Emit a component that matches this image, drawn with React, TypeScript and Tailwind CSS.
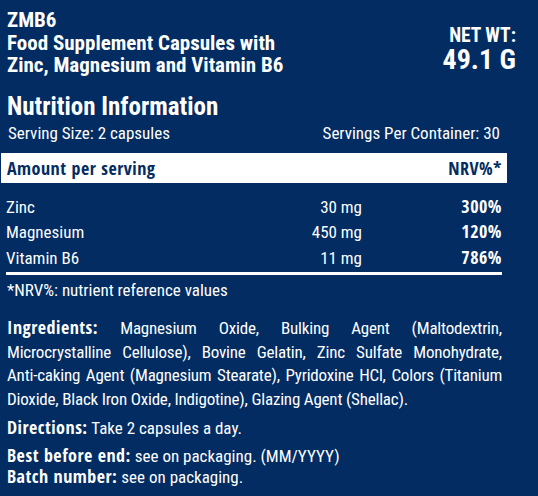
const rows = [
  { name: "Zinc", amount: "30 mg", nrv: "300%" },
  { name: "Magnesium", amount: "450 mg", nrv: "120%" },
  { name: "Vitamin B6", amount: "11 mg", nrv: "786%" },
];

const B = "font-['Open_Sans_Condensed','Roboto_Condensed',sans-serif] font-bold text-[18px] tracking-[0.5px] leading-none";

export default function App() {
  return (
    <div className="w-[538px] h-[496px] overflow-hidden bg-[#022c62] text-white font-['Roboto_Condensed',sans-serif]">
      <div className="flex justify-between pl-[7px] pr-[22px] pt-[9px]">
        <div className="font-bold text-[21px] leading-[22.5px]">
          <div>ZMB6</div>
          <div>Food Supplement Capsules with</div>
          <div>Zinc, Magnesium and Vitamin B6</div>
        </div>
        <div className="flex flex-col items-end pt-[17px] font-bold">
          <div className="text-[19.5px] leading-[20px]">NET WT:</div>
          <div className="text-[28px] leading-[28px]">49.1 G</div>
        </div>
      </div>
      <div className="pl-[7px] mt-[16px] font-bold text-[25px] leading-[28px]">Nutrition Information</div>
      <div className="flex justify-between pl-[8px] pr-[38px] mt-[1px] text-[17px] leading-[22px]">
        <span>Serving Size: 2 capsules</span>
        <span>Servings Per Container: 30</span>
      </div>
      <div className="ml-[1px] mt-[9px] w-[506px] h-[30px] bg-white text-[#022c62] text-[17px] flex items-center justify-between pl-[6px] pr-[5px]">
        <span className={B}>Amount per serving</span>
        <span className={B}>NRV%*</span>
      </div>
      <div className="pl-[6px] pr-[36px] pt-[12px]">
        {rows.map((r) => (
          <div key={r.name} className="grid grid-cols-[1fr_90px_140px] items-baseline text-[17px] leading-[25.5px]">
            <span>{r.name}</span>
            <span className="text-right">{r.amount}</span>
            <span className={"text-right " + B}>{r.nrv}</span>
          </div>
        ))}
      </div>
      <div className="ml-[6px] mt-[1px] w-[496px] h-[3px] bg-white" />
      <div className="pl-[7px] mt-[4px] text-[17px] leading-[22px]">*NRV%: nutrient reference values</div>
      <p className="pl-[7px] pr-[36px] mt-[16px] text-[17px] leading-[23.7px] tracking-[-0.2px] text-justify">
        <span className={B}>Ingredients:</span> Magnesium Oxide, Bulking Agent (Maltodextrin, Microcrystalline Cellulose), Bovine Gelatin, Zinc Sulfate Monohydrate, Anti{"\u2011"}caking Agent (Magnesium Stearate), Pyridoxine HCl, Colors (Titanium Dioxide, Black Iron Oxide, Indigotine), Glazing Agent (Shellac).
      </p>
      <div className="pl-[7px] mt-[5px] text-[17px] leading-[22px]">
        <span className={B}>Directions:</span> Take 2 capsules a day.
      </div>
      <div className="pl-[7px] mt-[7.5px] text-[17px] leading-[21px]">
        <div>
          <span className={B}>Best before end:</span> see on packaging. (MM/YYYY)
        </div>
        <div>
          <span className={B}>Batch number:</span> see on packaging.
        </div>
      </div>
    </div>
  );
}
